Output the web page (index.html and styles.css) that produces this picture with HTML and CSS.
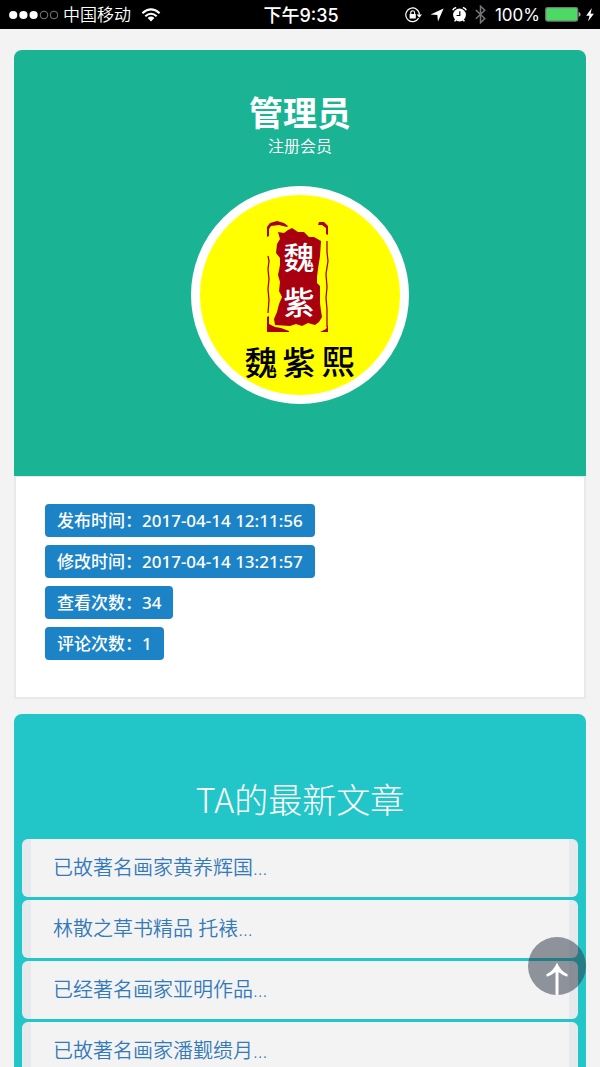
FILE: index.html
```html
<!DOCTYPE html>
<html lang="zh-CN">
<head>
<meta charset="utf-8">
<meta name="viewport" content="width=device-width, initial-scale=1">
<title>管理员</title>
<link rel="stylesheet" href="styles.css">
</head>
<body>
<div class="screen">
  <header class="status">
    <div class="status-side">
      <svg class="signal" width="50" height="12" viewBox="0 0 50 12" aria-hidden="true">
        <g fill="#fff"><circle cx="5.2" cy="6" r="4.1"/><circle cx="15.4" cy="6" r="4.1"/><circle cx="25.6" cy="6" r="4.1"/></g>
        <g fill="none" stroke="#999" stroke-width="0.8"><circle cx="36" cy="6" r="3.8"/><circle cx="46" cy="6" r="3.8"/></g>
      </svg>
      <span class="carrier">中国移动</span>
      <svg class="wifi" width="20" height="14" viewBox="0 0 20 14" aria-hidden="true">
        <g fill="none" stroke="#fff" stroke-width="2.1"><path d="M1.4 5.2Q10-2.4 18.6 5.2"/><path d="M4.3 8.3Q10 3.2 15.7 8.3"/></g>
        <path fill="#fff" d="M6.6 9.9Q10 7.2 13.4 9.9L10 13.5Z"/>
      </svg>
    </div>
    <div class="time">下午9:35</div>
    <div class="status-side status-right">
      <svg width="17" height="16" viewBox="0 0 17 16" aria-hidden="true">
        <path fill="none" stroke="#fff" stroke-width="1.2" d="M13.6 11A6.8 6.8 0 1 1 14.4 7.8"/>
        <path fill="#fff" d="M11.6 7.5H17L14.3 10.8ZM4.6 7.1H10.8V11.6H4.6Z"/>
        <path fill="none" stroke="#fff" stroke-width="1.1" d="M5.8 7V5.6A1.9 1.9 0 0 1 9.6 5.6V7"/>
      </svg>
      <svg width="14" height="14" viewBox="0 0 14 14" aria-hidden="true"><path fill="#fff" d="M13.6.6L8 13.4L7.3 7.1L.5 6.5Z"/></svg>
      <svg width="15" height="15" viewBox="0 0 15 15" aria-hidden="true">
        <circle cx="7.5" cy="8" r="6.4" fill="#fff"/>
        <path fill="none" stroke="#fff" stroke-width="1.5" d="M.8 3.3Q1.6 1.1 4.2 .6M14.2 3.3Q13.4 1.1 10.8 .6M3.8 12.8L2.6 14.4M11.2 12.8L12.4 14.4"/>
        <path fill="none" stroke="#000" stroke-width="1.2" d="M7.8 4.2V8.5H4.6"/>
      </svg>
      <svg width="11" height="19" viewBox="0 0 11 19" aria-hidden="true"><path fill="none" stroke="#777" stroke-width="1.5" d="M.8 5L9.8 13.4L5.5 17.8V1.2L9.8 5.3L.8 13.8"/></svg>
      <span class="percent">100%</span>
      <svg class="battery" width="36" height="15" viewBox="0 0 36 15" aria-hidden="true">
        <rect x=".7" y=".7" width="32" height="13.4" rx="1.8" fill="#4cd964" stroke="#777" stroke-width="1.2"/>
        <path fill="#aaa" d="M33.6 5Q35.6 5.4 35.6 7.4T33.6 9.8Z"/>
      </svg>
      <svg width="8" height="14" viewBox="0 0 8 14" aria-hidden="true"><path fill="#fff" d="M5.8 0L.2 7.8H3.5L2 13.6L7.9 5.7H4.6Z"/></svg>
    </div>
  </header>

  <main class="content">
    <section class="profile">
      <div class="profile-head">
        <h1 class="name">管理员</h1>
        <p class="role">注册会员</p>
        <svg class="avatar" viewBox="0 0 200 200" role="img" aria-label="魏紫熙">
          <g fill="#a8000f">
            <path d="M78 37L84 38L88 35L92 33L98 37L104 37L109 42L114 42L121 46L120 61L118 74L117 82V88L120 91L120 108L121 116L122 122L119 127L115 130L108 128L102 131L96 129L90 131L75 130L74 124L77 117L79 109L82 102L79 96L80 87L78 80L80 70L80 63L76 58L77 49L80 44Z"/>
            <path d="M67 42V32L70 28L77 26L84 28L88 31L87 32L79 30L71 31L69 34V41ZM118 30L119 27L124 27L128 31V40L126 39V33L122 30ZM67 122L69 121V129L75 132L81 133L89 136V137H67ZM128 130V137H120L126 134Z"/>
          </g>
          <path fill="none" stroke="#a8000f" stroke-width="1.3" d="M68 61L69 66L68 74L69 84L68 94L69 105L68 118M127 46V57L128 66L126 79L127 92L126 103L127 114V132"/>
          <text class="seal" x="99" y="74">魏</text>
          <text class="seal" x="99" y="119">紫</text>
          <text class="signature" x="61" y="180">魏</text>
          <text class="signature" x="99" y="180">紫</text>
          <text class="signature" x="138" y="179">熙</text>
        </svg>
      </div>
      <div class="profile-body">
        <span class="tag">发布时间：2017-04-14 12:11:56</span>
        <span class="tag">修改时间：2017-04-14 13:21:57</span>
        <span class="tag">查看次数：34</span>
        <span class="tag">评论次数：1</span>
      </div>
    </section>

    <section class="articles">
      <h2 class="articles-title">TA的最新文章</h2>
      <ul class="article-list">
        <li><a class="article" href="#">已故著名画家黄养辉国...</a></li>
        <li><a class="article" href="#">林散之草书精品 托裱...</a></li>
        <li><a class="article" href="#">已经著名画家亚明作品...</a></li>
        <li><a class="article" href="#">已故著名画家潘觐缋月...</a></li>
      </ul>
    </section>
  </main>

  <button class="to-top" type="button" aria-label="返回顶部">
    <svg width="58" height="58" viewBox="0 0 58 58" aria-hidden="true">
      <path fill="#fff" d="M29 25.5Q32 33.5 39.8 37.5L39.2 39.8Q34 38 30.5 35V58H27.5V35Q24 38 18.8 39.8L18.2 37.5Q26 33.5 29 25.5Z"/>
    </svg>
  </button>
</div>
</body>
</html>
```

FILE: styles.css
```css
* {
  box-sizing: border-box;
}

body {
  margin: 0;
  background: #f3f3f4;
  font-family: "Open Sans", "Noto Sans CJK SC", sans-serif;
}

.screen {
  display: flex;
  flex-direction: column;
  height: 100vh;
}

.status {
  display: flex;
  flex: none;
  align-items: center;
  height: 29px;
  padding: 0 6px 0 8px;
  background: #000;
  color: #fff;
  font-family: Inter, "Noto Sans CJK SC", sans-serif;
  font-size: 17px;
  line-height: 29px;
}

.status-side {
  display: flex;
  flex: 1;
  align-items: center;
}

.status-right {
  justify-content: flex-end;
  gap: 8px;
}

.carrier,
.time,
.percent {
  padding-top: 2px;
}

.carrier {
  margin: 0 10px 0 5px;
  font-weight: 350;
}

.time {
  font-size: 18px;
  font-weight: 500;
}

.percent {
  margin-left: 1px;
  font-weight: 400;
}

.battery {
  margin: 0 -3px;
}

.content {
  flex: 1;
  min-height: 0;
  padding: 21px 14px 0;
  overflow-y: auto;
  scrollbar-width: none;
}

.profile {
  margin-bottom: 15px;
}

.profile-head {
  display: flex;
  flex-direction: column;
  align-items: center;
  padding: 42px 20px 72px;
  border-radius: 8px 8px 0 0;
  background: #1ab394;
  color: #fff;
}

.name {
  margin: 0;
  font-size: 34px;
  font-weight: 700;
  line-height: 43px;
}

.role {
  margin: 0 0 29px;
  font-size: 16px;
  font-weight: 350;
  line-height: 22px;
}

.avatar {
  width: 218px;
  height: 218px;
  border: 9px solid #fff;
  border-radius: 50%;
  background: #ff0;
}

.seal,
.signature {
  font-family: "Noto Sans CJK TC", sans-serif;
  text-anchor: middle;
}

.seal {
  fill: #fff;
  font-size: 31px;
  font-weight: 500;
}

.signature {
  fill: #000;
  font-size: 33px;
  font-weight: 500;
}

.profile-body {
  display: flex;
  flex-direction: column;
  align-items: flex-start;
  gap: 8px;
  padding: 27px 29px 37px;
  border: 2px solid #e7eaec;
  border-top-width: 1px;
  background: #fff;
}

.tag {
  padding: 0 12px;
  border-radius: 4px;
  background: #1c84c6;
  color: #fff;
  font-family: "Noto Sans", "Noto Sans CJK SC", sans-serif;
  font-size: 17px;
  font-weight: 500;
  line-height: 33px;
}

.articles {
  padding: 60px 8px 8px;
  border-radius: 8px 8px 0 0;
  background: #23c6c8;
}

.articles-title {
  margin: 0 0 15px;
  color: #fff;
  font-family: "Noto Sans CJK SC", sans-serif;
  font-size: 34px;
  font-weight: 300;
  line-height: 50px;
  text-align: center;
}

.article-list {
  display: flex;
  flex-direction: column;
  gap: 3px;
  margin: 0;
  padding: 0;
  list-style: none;
}

.article {
  display: block;
  padding: 0 22px;
  border: solid #e7eaec;
  border-width: 0 9px;
  border-radius: 6px;
  background: #f3f3f4;
  color: #337ab7;
  font-size: 20px;
  font-weight: 350;
  line-height: 58px;
  text-decoration: none;
}

.to-top {
  position: fixed;
  right: 14px;
  bottom: 72px;
  width: 58px;
  height: 58px;
  padding: 0;
  overflow: hidden;
  border: 0;
  border-radius: 50%;
  background: rgba(40, 50, 65, 0.5);
}

.to-top svg {
  display: block;
}
```
